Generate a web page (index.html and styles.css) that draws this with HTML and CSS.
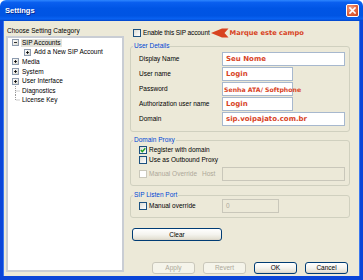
FILE: index.html
```html
<!DOCTYPE html>
<html>
<head>
<meta charset="utf-8">
<link rel="stylesheet" href="styles.css">
</head>
<body>
<div class="window">
  <div class="titlebar">
    <span class="title">Settings</span>
    <span class="close"><svg width="13" height="13" viewBox="0 0 13 13"><path d="M4 4 L9 9 M9 4 L4 9" stroke="#fff" stroke-width="1.6" stroke-linecap="square"/></svg></span>
  </div>
  <div class="frame">
    <div class="left">
      <div class="cat-label">Choose Setting Category</div>
      <ul class="tree">
        <li class="node"><span class="exp"><svg width="5" height="5" viewBox="0 0 5 5"><path d="M1 2.5 H4" stroke="#000" stroke-width="0.8"/></svg></span><span class="lbl sel">SIP Accounts</span></li>
        <li class="node child"><span class="exp"><svg width="5" height="5" viewBox="0 0 5 5"><path d="M1 2.5 H4 M2.5 1 V4" stroke="#000" stroke-width="0.8"/></svg></span><span class="lbl">Add a New SIP Account</span></li>
        <li class="node"><span class="exp"><svg width="5" height="5" viewBox="0 0 5 5"><path d="M1 2.5 H4 M2.5 1 V4" stroke="#000" stroke-width="0.8"/></svg></span><span class="lbl">Media</span></li>
        <li class="node"><span class="exp"><svg width="5" height="5" viewBox="0 0 5 5"><path d="M1 2.5 H4 M2.5 1 V4" stroke="#000" stroke-width="0.8"/></svg></span><span class="lbl">System</span></li>
        <li class="node"><span class="exp"><svg width="5" height="5" viewBox="0 0 5 5"><path d="M1 2.5 H4 M2.5 1 V4" stroke="#000" stroke-width="0.8"/></svg></span><span class="lbl">User Interface</span></li>
        <li class="node"><span class="conn"><svg width="7" height="10" viewBox="0 0 7 10"><path d="M2.5 0 V10 M2.5 5 H7" stroke="#9a9a9a" stroke-width="1" stroke-dasharray="1 1"/></svg></span><span class="lbl">Diagnostics</span></li>
        <li class="node"><span class="conn"><svg width="7" height="10" viewBox="0 0 7 10"><path d="M2.5 0 V5 H7" fill="none" stroke="#9a9a9a" stroke-width="1" stroke-dasharray="1 1"/></svg></span><span class="lbl">License Key</span></li>
      </ul>
    </div>
    <div class="right">
      <div class="enable-row">
        <span class="cb"></span>
        <span class="cb-text">Enable this SIP account</span>
        <svg class="arrow" width="18" height="10" viewBox="0 0 18 10"><polygon points="0,5 11,0.5 17.5,0.5 13.5,5 17.5,9.5 11,9.5" fill="#D8431F"/></svg>
        <span class="note">Marque este campo</span>
      </div>

      <fieldset class="group user">
        <legend>User Details</legend>
        <div class="form">
          <span class="flabel">Display Name</span><div class="field long red">Seu Nome</div>
          <span class="flabel">User name</span><div class="field short red">Login</div>
          <span class="flabel">Password</span><div class="field short red small">Senha ATA/ Softphone</div>
          <span class="flabel">Authorization user name</span><div class="field short red">Login</div>
          <span class="flabel">Domain</span><div class="field long red">sip.voipajato.com.br</div>
        </div>
      </fieldset>

      <fieldset class="group proxy">
        <legend>Domain Proxy</legend>
        <div class="check-row"><span class="cb checked"><svg width="6" height="6" viewBox="0 0 6 6"><path d="M0.8 3 L2.3 4.6 L5.3 1.2" fill="none" stroke="#21A121" stroke-width="1.4"/></svg></span><span class="cb-text">Register with domain</span></div>
        <div class="check-row"><span class="cb"></span><span class="cb-text">Use as Outbound Proxy</span></div>
        <div class="host-row">
          <div class="check-row"><span class="cb disabled"></span><span class="cb-text dis">Manual Override</span></div>
          <span class="dis">Host</span>
          <div class="field disabled-field"></div>
        </div>
      </fieldset>

      <fieldset class="group port">
        <legend>SIP Listen Port</legend>
        <div class="port-row">
          <div class="check-row"><span class="cb"></span><span class="cb-text">Manual override</span></div>
          <div class="field port-field disabled-field"><span class="dis">0</span></div>
        </div>
      </fieldset>

      <button class="btn clear">Clear</button>

      <div class="footer">
        <button class="btn disabled">Apply</button>
        <button class="btn disabled">Revert</button>
        <button class="btn">OK</button>
        <button class="btn">Cancel</button>
      </div>
    </div>
  </div>
</div>
</body>
</html>
```

FILE: styles.css
```css
* { box-sizing: border-box; }
html, body { margin: 0; padding: 0; }
body {
  width: 363px;
  height: 280px;
  overflow: hidden;
  background: #ffffff;
  font-family: "Liberation Sans", Arial, sans-serif;
  font-size: 6.5px;
  color: #000;
}
.window {
  width: 363px;
  height: 280px;
  display: flex;
  flex-direction: column;
}
.titlebar {
  height: 21px;
  flex: none;
  display: flex;
  align-items: flex-start;
  justify-content: space-between;
  border-radius: 6px 6px 0 0;
  background: linear-gradient(#2E86FF 0%, #0A5FEF 12%, #0055E5 40%, #0054E3 75%, #0A62F2 90%, #0043C8 100%);
}
.title {
  color: #fff;
  font-weight: bold;
  font-size: 7.5px;
  line-height: 8px;
  margin: 7px 0 0 5px;
  text-shadow: 1px 1px 0 #0A2A90;
}
.close {
  width: 13px;
  height: 13px;
  margin: 4px 4px 0 0;
  border: 1px solid #fff;
  border-radius: 2px;
  background: radial-gradient(circle at 35% 30%, #F1A38A 0%, #E56A44 45%, #C8401B 100%);
  display: flex;
}
.close svg { margin: -1px; }
.frame {
  flex: 1;
  display: flex;
  background: #ECE9D8;
  border: 3px solid #0A45D8;
  border-top: 0;
  border-bottom-width: 4px;
  box-shadow: inset 1px 0 0 #3A78F0, inset -1px 0 0 #3A78F0;
}
.left {
  width: 118px;
  margin-left: 3px;
  display: flex;
  flex-direction: column;
  padding-bottom: 4px;
}
.cat-label {
  line-height: 8px;
  margin-top: 6px;
  margin-bottom: 1px;
  padding-left: 1px;
}
.tree {
  flex: 1;
  margin: 0;
  padding: 0 0 0 5px;
  list-style: none;
  background: #fff;
  border: 2px solid #C9CDD4;
}
.node {
  height: 9.6px;
  display: flex;
  align-items: center;
}
.node.child { padding-left: 12px; }
.exp {
  width: 5px;
  height: 5px;
  flex: none;
  border: 0;
  outline: 1px solid #8C9AAE;
  background: linear-gradient(135deg, #fff, #d8d8d0);
  display: flex;
  margin-right: 3px;
}
.conn {
  width: 7px;
  height: 10px;
  flex: none;
  display: flex;
  margin-right: 1px;
}
.lbl {
  line-height: 8px;
  padding: 0 1px;
}
.lbl.sel { background: #E3E2DA; }
.right {
  width: 220px;
  margin-left: 6px;
  display: flex;
  flex-direction: column;
}
.enable-row {
  height: 8px;
  margin-top: 8px;
  display: flex;
  align-items: center;
  padding-left: 3px;
}
.cb {
  width: 8px;
  height: 8px;
  flex: none;
  border: 1px solid #1C5180;
  background: linear-gradient(135deg, #DCDCD5, #fff);
  display: flex;
  align-items: center;
  justify-content: center;
}
.cb.disabled { border-color: #CAC8BB; background: #fff; }
.cb-text { margin-left: 2px; line-height: 8px; white-space: nowrap; }
.enable-row .cb-text { letter-spacing: -0.1px; }
.arrow { margin-left: 1px; flex: none; }
.note {
  margin-left: 1px;
  color: #D8431F;
  font-family: "DejaVu Sans", Verdana, sans-serif;
  font-weight: bold;
  font-size: 6.7px;
  line-height: 8px;
  white-space: nowrap;
}
.group {
  margin: 0;
  min-width: 0;
  border: 1px solid #D0D0BF;
  border-radius: 3px;
  padding: 2px 4px 5px 8px;
}
.group legend {
  color: #0046D5;
  line-height: 8px;
  padding: 0 1px;
  margin-left: -6px;
}
.user { margin-top: 5px; }
.form {
  display: grid;
  grid-template-columns: 83px auto;
  row-gap: 1px;
  align-items: center;
}
.flabel { line-height: 8px; white-space: nowrap; }
.field {
  height: 14px;
  background: #fff;
  border: 1px solid #A7B8CE;
  padding-left: 3px;
  display: flex;
  align-items: center;
  white-space: nowrap;
  overflow: visible;
}
.field.long { width: 123px; }
.field.short { width: 71px; }
.red {
  color: #D8431F;
  font-family: "DejaVu Sans", Verdana, sans-serif;
  font-weight: bold;
  font-size: 7px;
}
.red.small { font-size: 6.2px; padding-left: 1px; }
.proxy {
  margin-top: 4px;
  padding-top: 1px;
  padding-bottom: 4px;
}
.check-row {
  height: 10px;
  display: flex;
  align-items: center;
}
.host-row {
  margin-top: 2px;
  display: grid;
  grid-template-columns: 63px 20px 1fr;
  align-items: center;
}
.dis { color: #ACA899; line-height: 8px; }
.disabled-field {
  background: #ECE9D8;
  border-color: #C9C7BA;
  width: 123px;
}
.port {
  margin-top: 5px;
  padding-top: 0;
  padding-bottom: 4px;
}
.port-row {
  display: grid;
  grid-template-columns: 83px auto;
  align-items: center;
}
.port-field { width: 57px; height: 14px; }
.btn {
  font-family: "Liberation Sans", Arial, sans-serif;
  font-size: 6.5px;
  color: #000;
  height: 13px;
  padding: 0;
  border: 1px solid #003C74;
  border-radius: 3px;
  background: linear-gradient(#FFFFFF 0%, #F4F3EE 50%, #E6E3D7 85%, #D6D0C5 100%);
  line-height: 8px;
}
.btn.disabled {
  color: #ACA899;
  border-color: #C9C7BA;
  background: #F5F4EA;
}
.clear {
  width: 90px;
  margin-top: 10px;
  margin-left: 2px;
}
.footer {
  margin-top: 21px;
  display: flex;
  justify-content: flex-end;
  gap: 8px;
  padding-right: 2px;
}
.footer .btn { width: 43px; height: 12px; }
```
